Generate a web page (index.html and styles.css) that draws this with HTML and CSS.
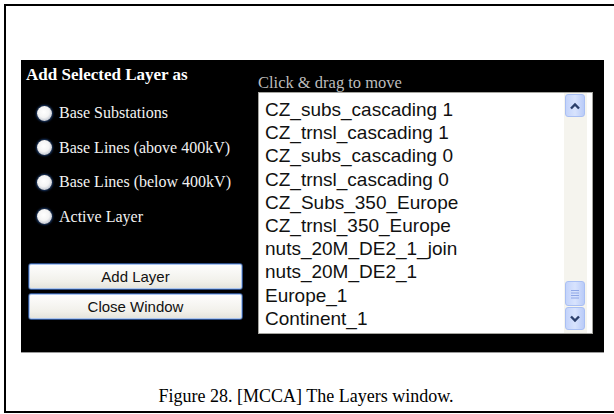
FILE: index.html
```html
<!DOCTYPE html>
<html lang="en">
<head>
  <meta charset="UTF-8" />
  <title>[MCCA] The Layers window</title>
  <link rel="stylesheet" href="styles.css">
</head>
<body>
  <div class="frame">
    <div class="panel">
      <div class="side">
        <h2>Add Selected Layer as</h2>
        <label class="opt"><span class="radio"></span>Base Substations</label>
        <label class="opt"><span class="radio"></span>Base Lines (above 400kV)</label>
        <label class="opt"><span class="radio"></span>Base Lines (below 400kV)</label>
        <label class="opt"><span class="radio"></span>Active Layer</label>
        <div class="actions">
          <button class="btn">Add Layer</button>
          <button class="btn">Close Window</button>
        </div>
      </div>
      <div class="main">
        <p class="hint">Click &amp; drag to move</p>
        <div class="listbox">
          <ul class="items">
            <li>CZ_subs_cascading 1</li>
            <li>CZ_trnsl_cascading 1</li>
            <li>CZ_subs_cascading 0</li>
            <li>CZ_trnsl_cascading 0</li>
            <li>CZ_Subs_350_Europe</li>
            <li>CZ_trnsl_350_Europe</li>
            <li>nuts_20M_DE2_1_join</li>
            <li>nuts_20M_DE2_1</li>
            <li>Europe_1</li>
            <li>Continent_1</li>
          </ul>
          <div class="scroll">
            <div class="sbtn">
              <svg width="12" height="8" viewBox="0 0 12 8"><path d="M2 6.5 L6 2.5 L10 6.5" fill="none" stroke="#2b3f6b" stroke-width="2.4"/></svg>
            </div>
            <div class="track"></div>
            <div class="sbtn thumb">
              <svg width="10" height="10" viewBox="0 0 10 10"><path d="M1 1.5h8M1 4h8M1 6.5h8M1 9h8" stroke="#8ea6e6" stroke-width="1"/></svg>
            </div>
            <div class="sbtn">
              <svg width="12" height="8" viewBox="0 0 12 8"><path d="M2 1.5 L6 5.5 L10 1.5" fill="none" stroke="#2b3f6b" stroke-width="2.4"/></svg>
            </div>
          </div>
        </div>
      </div>
    </div>
    <p class="caption">Figure 28. [MCCA] The Layers window.</p>
  </div>
</body>
</html>
```

FILE: styles.css
```css
body {
  margin: 0;
  background: #fff;
}
.frame {
  margin: 4px 0 0 4px;
  width: 608px;
  height: 405px;
  border: 2px solid #000;
  border-right: none;
}
.panel {
  display: flex;
  margin: 54px 0 0 15px;
  width: 583px;
  height: 292px;
  background: #000;
  border-bottom: 1px solid #9a9a9a;
}
.side {
  width: 237px;
  padding: 5px 0 0 5px;
  box-sizing: border-box;
  display: flex;
  flex-direction: column;
}
.side h2 {
  margin: 0 0 11px;
  font: bold 17px/20px "Liberation Serif", serif;
  color: #fff;
}
.opt {
  display: flex;
  align-items: center;
  height: 34.5px;
  padding-left: 11px;
  font: 16px "Liberation Serif", serif;
  color: #f2f2f2;
}
.radio {
  width: 15px;
  height: 15px;
  margin-right: 7px;
  border-radius: 50%;
  background: radial-gradient(circle at 45% 40%, #fff 0, #f4f4f4 45%, #c9ced8 70%, #1d3557 88%);
  box-shadow: 0 0 2px 1px #1b3a6b;
}
.actions {
  margin-top: 29px;
  padding-left: 2px;
  display: flex;
  flex-direction: column;
  gap: 3px;
}
.btn {
  width: 215px;
  height: 27px;
  padding: 0;
  font: 15px "Liberation Sans", Arial, sans-serif;
  color: #111;
  background: linear-gradient(#fefefe, #f1f0ea 70%, #e3e2da);
  border: 1px solid #2c4d86;
  border-radius: 3px;
  box-shadow: inset 0 0 0 1px #a9c4ef;
}
.main {
  padding-top: 14px;
}
.hint {
  margin: 0 0 1px;
  font: 16.5px/17px "Liberation Serif", serif;
  color: #bdbdbd;
}
.listbox {
  display: flex;
  width: 335px;
  height: 242px;
  box-sizing: border-box;
  border: 1px solid #a5a5a0;
  background: #fff;
}
.items {
  flex: 1;
  list-style: none;
  margin: 0;
  padding: 5px 0 0 6px;
  font: 19px/23.2px "Liberation Sans", Arial, sans-serif;
  color: #111;
}
.scroll {
  width: 22px;
  margin-right: 5px;
  padding: 1px 0 3px 1px;
  display: flex;
  flex-direction: column;
  background: #f5f4ee;
}
.track {
  flex: 1;
}
.sbtn {
  width: 20px;
  height: 23px;
  display: flex;
  align-items: center;
  justify-content: center;
  box-sizing: border-box;
  border: 1px solid #a9bff3;
  border-radius: 3px;
  background: linear-gradient(90deg, #c3d3fb, #d8e3fd 50%, #b9cbf8);
}
.thumb {
  height: 25px;
  margin-bottom: 1px;
}
.caption {
  width: 600px;
  margin: 33px 0 0;
  text-align: center;
  font: 18px/21px "Liberation Serif", "Times New Roman", serif;
  color: #000;
}
```
